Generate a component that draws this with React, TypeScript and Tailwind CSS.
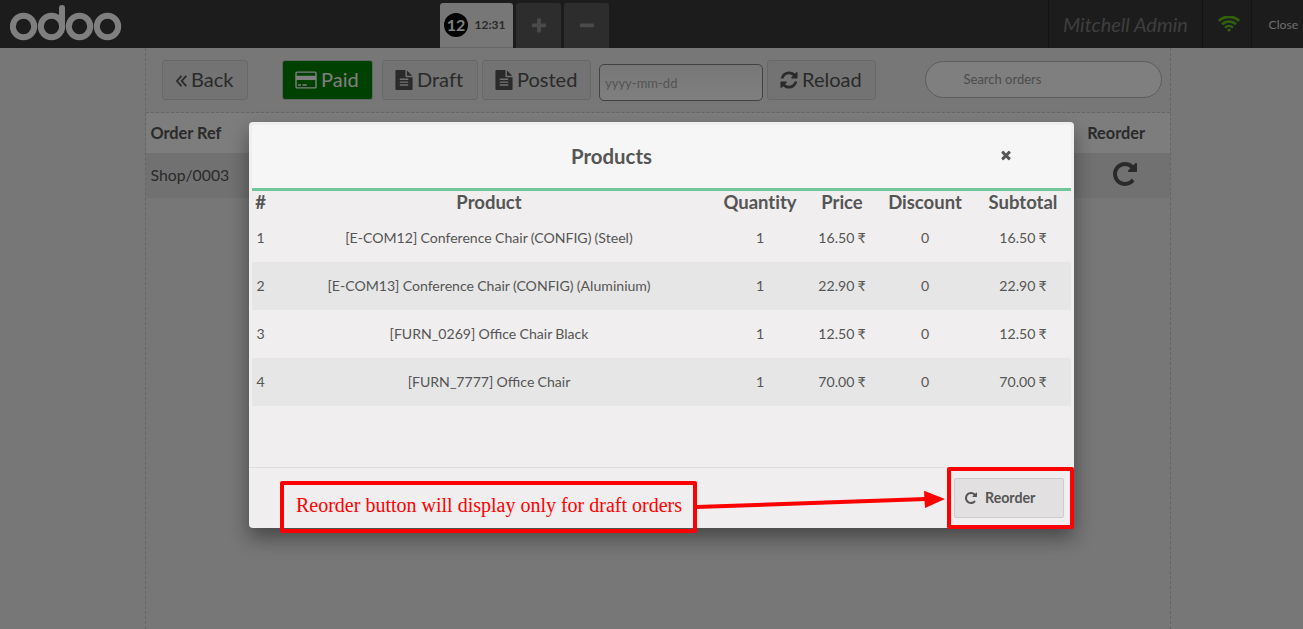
import React from "react";

const PATHS = {
  repeat:
    "M1664 256v448q0 26-19 45t-45 19h-448q-42 0-59-40-17-39 14-69l138-138q-148-137-349-137-104 0-198.5 40.5t-163.5 109.5-109.5 163.5-40.5 198.5 40.5 198.5 109.5 163.5 163.5 109.5 198.5 40.5q119 0 225-52t179-147q7-10 23-12 15 0 25 9l137 138q9 8 9.5 20.5t-7.5 22.5q-109 132-264 204.5t-327 72.5q-156 0-298-61t-245-164-164-245-61-298 61-298 164-245 245-164 298-61q147 0 284.5 55.5t244.5 156.5l130-129q29-31 70-14 39 17 39 59z",
  refresh:
    "M1639 1056q0 5-1 7-64 268-268 434.5t-478 166.5q-146 0-282.5-55t-243.5-157l-129 129q-19 19-45 19t-45-19-19-45v-448q0-26 19-45t45-19h448q26 0 45 19t19 45-19 45l-137 137q71 66 161 102t187 36q134 0 250-65t186-179q11-17 53-117 8-23 30-23h192q13 0 22.5 9.5t9.5 22.5zm25-800v448q0 26-19 45t-45 19h-448q-26 0-45-19t-19-45 19-45l138-138q-148-137-349-137-134 0-250 65t-186 179q-11 17-53 117-8 23-30 23h-199q-13 0-22.5-9.5t-9.5-22.5v-7q65-268 270-434.5t480-166.5q146 0 284 55.5t245 156.5l130-129q19-19 45-19t45 19 19 45z",
  file: "M1596 476q14 14 28 36h-472v-472q22 14 36 28zm-476 164h544v1056q0 40-28 68t-68 28h-1344q-40 0-68-28t-28-68v-1600q0-40 28-68t68-28h800v544q0 40 28 68t68 28zm160 736v-64q0-14-9-23t-23-9h-704q-14 0-23 9t-9 23v64q0 14 9 23t23 9h704q14 0 23-9t9-23zm0-256v-64q0-14-9-23t-23-9h-704q-14 0-23 9t-9 23v64q0 14 9 23t23 9h704q14 0 23-9t9-23zm0-256v-64q0-14-9-23t-23-9h-704q-14 0-23 9t-9 23v64q0 14 9 23t23 9h704q14 0 23-9t9-23z",
  plus: "M1600 736v192q0 40-28 68t-68 28h-416v416q0 40-28 68t-68 28h-192q-40 0-68-28t-28-68v-416h-416q-40 0-68-28t-28-68v-192q0-40 28-68t68-28h416v-416q0-40 28-68t68-28h192q40 0 68 28t28 68v416h416q40 0 68 28t28 68z",
  minus:
    "M1600 736v192q0 40-28 68t-68 28h-1216q-40 0-68-28t-28-68v-192q0-40 28-68t68-28h1216q40 0 68 28t28 68z",
  times:
    "M1490 1322q0 40-28 68l-136 136q-28 28-68 28t-68-28l-294-294-294 294q-28 28-68 28t-68-28l-136-136q-28-28-28-68t28-68l294-294-294-294q-28-28-28-68t28-68l136-136q28-28 68-28t68 28l294 294 294-294q28-28 68-28t68 28l136 136q28 28 28 68t-28 68l-294 294 294 294q28 28 28 68z",
  card: "M1760 128q66 0 113 47t47 113v1216q0 66-47 113t-113 47h-1600q-66 0-113-47t-47-113v-1216q0-66 47-113t113-47h1600zm-1600 128q-13 0-22.5 9.5t-9.5 22.5v224h1664v-224q0-13-9.5-22.5t-22.5-9.5h-1600zm1600 1280q13 0 22.5-9.5t9.5-22.5v-608h-1664v608q0 13 9.5 22.5t22.5 9.5h1600zm-1504-128v-128h256v128h-256zm384 0v-128h384v128h-384z",
};

function Icon({ name, className, box = "0 0 1792 1792" }: { name: keyof typeof PATHS; className: string; box?: string }) {
  return (
    <svg viewBox={box} className={`shrink-0 ${className}`} fill="currentColor">
      <path d={PATHS[name]} />
    </svg>
  );
}

function Logo() {
  return (
    <svg viewBox="0 0 112 36" className="mt-[5px] ml-[10px] h-[36px] w-[112px] shrink-0" fill="none" stroke="#ffffff" strokeWidth="6">
      <circle cx="13.5" cy="21.5" r="10.7" />
      <circle cx="41.5" cy="21.5" r="10.7" />
      <circle cx="69.5" cy="21.5" r="10.7" />
      <circle cx="97.5" cy="21.5" r="10.7" />
      <path d="M52 21V3" strokeLinecap="round" />
    </svg>
  );
}

function Wifi() {
  return (
    <svg viewBox="0 0 22 16" className="h-[16px] w-[22px]" fill="none" stroke="#5dc01d">
      <path d="M.8 4.9a14.6 14.6 0 0 1 20.4 0" strokeWidth="2.8" />
      <path d="M4 8.4a10 10 0 0 1 14 0" strokeWidth="2.5" />
      <path d="M7 11.6a5.8 5.8 0 0 1 8 0" strokeWidth="2.3" />
      <path d="M11 12.4l2.1 1.4L11 16l-2.1-2.2z" fill="#5dc01d" stroke="none" />
    </svg>
  );
}

const btn = "flex h-[40px] shrink-0 items-center rounded-[3px] border border-[#d0d0d0] bg-[#e6e6e6] text-[20px] leading-none text-[#555555]";

function Header() {
  return (
    <header className="flex h-[48px] shrink-0 bg-[#393939]">
      <Logo />
      <div className="ml-[318px] flex items-end gap-[3px]">
        <div className="flex h-[45px] w-[73px] items-center rounded-t-[3px] border-b border-[#cccccc] bg-[#eeeeee] pl-1">
          <span className="flex size-[24px] items-center justify-center rounded-full bg-black text-[16px] font-bold text-white">12</span>
          <span className="ml-[6.5px] text-[12px] font-bold text-[#555555]">12:31</span>
        </div>
        <div className="flex h-[45px] w-[45px] items-center justify-center rounded-t-[3px] bg-[#5b5b5b] text-[#949494]">
          <Icon name="plus" className="size-[18px]" />
        </div>
        <div className="flex h-[45px] w-[45px] items-center justify-center rounded-t-[3px] bg-[#5b5b5b] text-[#949494]">
          <Icon name="minus" className="size-[18px]" />
        </div>
      </div>
      <div className="ml-auto flex">
        <div className="flex w-[154px] items-center border-l border-[#292929] pb-px pl-[14px] text-[20px] italic whitespace-nowrap text-[#7d7d7d]">Mitchell Admin</div>
        <div className="flex w-[49px] items-center justify-center border-l border-[#292929] pl-[4px]">
          <Wifi />
        </div>
        <div className="flex w-[52px] items-center border-l border-[#292929] pt-[2px] pl-[16.5px] text-[12.2px] text-[#dddddd]">Close</div>
      </div>
    </header>
  );
}

function Toolbar() {
  return (
    <div className="flex h-[65px] shrink-0 border-b border-dashed border-[#cbcbcb] pt-3 pl-4">
      <div className={`${btn} w-[86px] pl-[13px]`}>
        <svg viewBox="0 0 11 12" className="mt-px mr-[4px] h-[12px] w-[11px]" fill="none" stroke="currentColor" strokeWidth="1.8">
          <path d="M5.5.8.9 6l4.6 5.2M10.3.8 5.7 6l4.6 5.2" />
        </svg>
        <span className="pb-[2px]">Back</span>
      </div>
      <div className="ml-[34px] flex h-[40px] w-[91px] items-center rounded-[3px] border border-[#cacaca] bg-[#008000] pl-[12px] text-[20px] leading-none text-white">
        <Icon name="card" box="0 0 1920 1792" className="mr-1 h-[20px] w-[22px]" />
        <span className="pb-[2px]">Paid</span>
      </div>
      <div className={`${btn} ml-[9px] w-[96px] pl-[11px]`}>
        <Icon name="file" className="mr-[3px] size-[20px]" />
        <span className="pb-[2px] [font-variant-ligatures:none]">Draft</span>
      </div>
      <div className={`${btn} ml-1 w-[109px] pl-[11px]`}>
        <Icon name="file" className="mr-[3px] size-[20px]" />
        <span className="pb-[2px]">Posted</span>
      </div>
      <div className="mt-1 ml-2 flex h-[37px] w-[164px] items-center rounded-[5px] border border-[#858585] bg-gradient-to-b from-[#efefef] to-white pt-[2px] pl-[5px] text-[13px] text-[#a9a9a9]">yyyy-mm-dd</div>
      <div className={`${btn} ml-1 w-[109px] pl-[11px]`}>
        <Icon name="refresh" className="mr-[3px] size-[20px]" />
        <span className="pb-[2px]">Reload</span>
      </div>
      <div className="mt-px ml-[49px] flex h-[37px] w-[237px] items-center rounded-full border border-[#bababa] bg-white pl-[37.5px] text-[13px] text-[#999999]">Search orders</div>
    </div>
  );
}

const ROWS = [
  ["1", "[E-COM12] Conference Chair (CONFIG) (Steel)", "1", "16.50 ₹", "0", "16.50 ₹"],
  ["2", "[E-COM13] Conference Chair (CONFIG) (Aluminium)", "1", "22.90 ₹", "0", "22.90 ₹"],
  ["3", "[FURN_0269] Office Chair Black", "1", "12.50 ₹", "0", "12.50 ₹"],
  ["4", "[FURN_7777] Office Chair", "1", "70.00 ₹", "0", "70.00 ₹"],
];

const cols = "grid grid-cols-[17px_440px_102px_62px_104px_92px] items-center text-center whitespace-nowrap";

function Popup() {
  return (
    <div className="relative ml-[249px] mt-[122px] flex h-[406px] w-[825px] flex-col rounded-[4px] bg-[#f0eeee] text-[#555555] shadow-[0_10px_20px_rgba(0,0,0,0.4)]">
      <div className="mx-[3px] mt-[3px] flex h-[66px] items-center border-b-[3px] border-[#6ec89b] bg-[#f6f6f6]">
        <h2 className="ml-[319px] w-[82px] text-[20.4px] font-bold">Products</h2>
        <Icon name="times" className="mb-[3px] ml-[346px] size-[14px]" />
      </div>
      <div className={`${cols} mx-[3px] h-[23px] pb-px text-[18.5px] leading-[20px] font-bold [font-variant-ligatures:none]`}>
        <span>#</span>
        <span>Product</span>
        <span>Quantity</span>
        <span>Price</span>
        <span>Discount</span>
        <span>Subtotal</span>
      </div>
      {ROWS.map((row, i) => (
        <div key={row[0]} className={`${cols} mx-[3px] h-[48px] text-[14.1px] [word-spacing:-0.4px] ${i % 2 ? "bg-[#e6e6e6]" : ""}`}>
          {row.map((cell, j) => (
            <span key={j}>{cell}</span>
          ))}
        </div>
      ))}
      <div className="mt-auto flex h-[61px] justify-end border-t border-[#dddddd] pt-[10px] pr-[10px]">
        <button className="flex h-[40px] w-[110px] items-center rounded-[2px] border border-[#cccccc] bg-[#e2e0e0] pl-[9px] text-[14.2px] font-bold">
          <Icon name="repeat" className="mr-[7px] size-[14px]" />
          Reorder
        </button>
      </div>
    </div>
  );
}

export default function App() {
  return (
    <div className="relative h-[629px] w-[1303px] overflow-hidden bg-[#eeeeee] font-['Lato',sans-serif]">
      <div className="flex h-full flex-col">
        <Header />
        <main className="ml-[145px] flex w-[1026px] grow flex-col border-x border-dashed border-[#cbcbcb]">
          <Toolbar />
          <div className="flex h-[40px] items-center justify-between bg-[#fafafa] pt-px pr-[25px] pl-[4.5px] text-[16.3px] font-bold text-[#555555]">
            <span>Order Ref</span>
            <span>Reorder</span>
          </div>
          <div className="flex h-[45px] items-center justify-between bg-[#e2e2e2] pr-[31px] pl-[4.5px] text-[15.8px] text-[#555555]">
            <span className="pb-[2px]">Shop/0003</span>
            <Icon name="repeat" className="mb-[4px] size-[28px]" />
          </div>
        </main>
      </div>
      <div className="absolute inset-0 flex items-start bg-black/50">
        <Popup />
      </div>
      <div className="absolute top-[481px] left-[280px] flex h-[52px] w-[417px] items-center justify-center rounded-[2px] border-4 border-[#ff0000] pb-[5px] pl-px font-['Liberation_Serif',serif] text-[20px] whitespace-nowrap text-[#ff0000]">
        Reorder button will display only for draft orders
      </div>
      <svg className="absolute top-[485px] left-[696px] h-[30px] w-[250px]" viewBox="0 0 250 30">
        <path d="M0 22 230 14" stroke="#ff0000" strokeWidth="4" />
        <path d="M228 5.8 249 14 229 23z" fill="#ff0000" />
      </svg>
      <div className="absolute top-[467px] left-[947px] h-[62px] w-[127px] rounded-[2px] border-4 border-[#ff0000]" />
    </div>
  );
}
